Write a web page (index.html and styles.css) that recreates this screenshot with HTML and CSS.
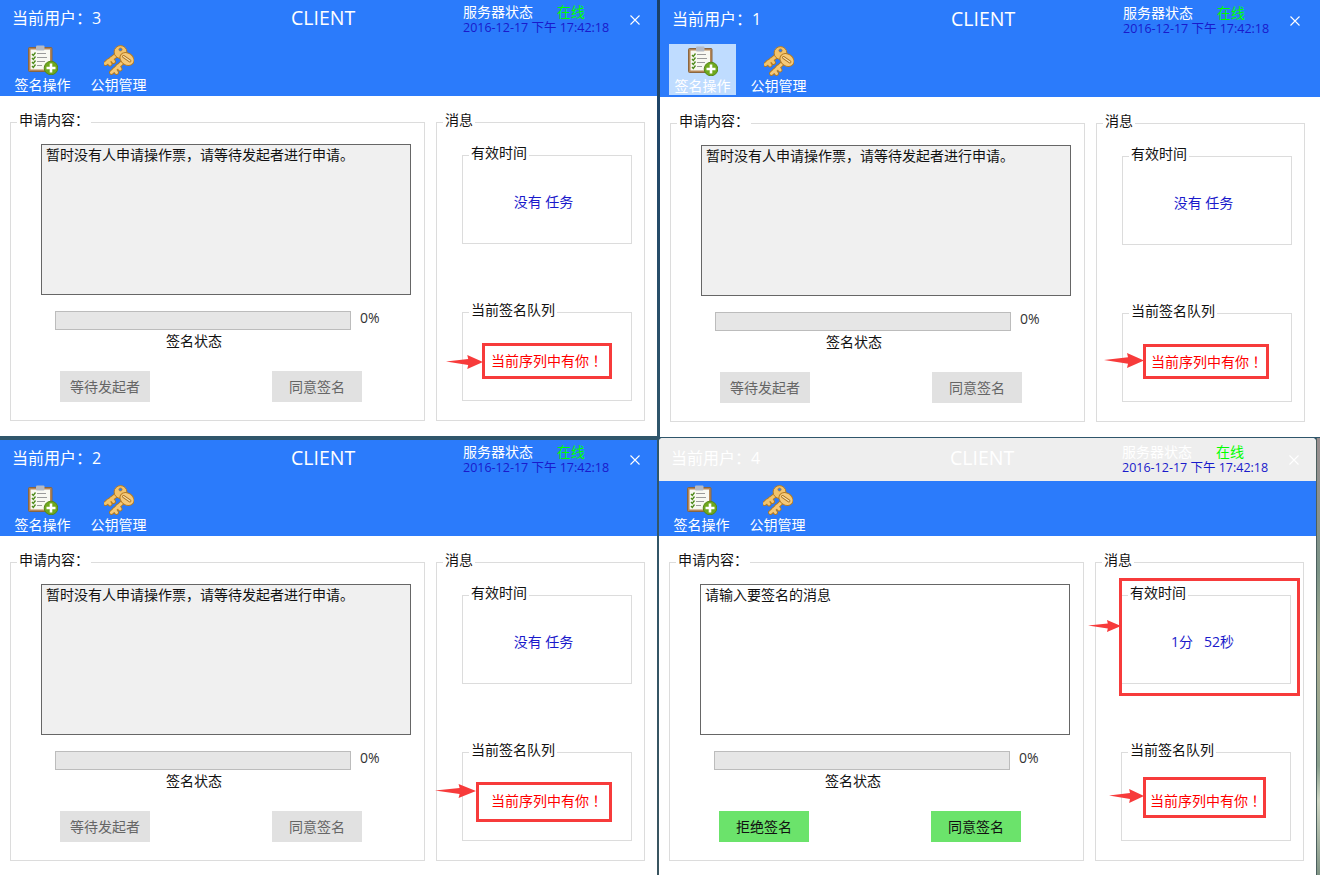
FILE: index.html
```html
<!DOCTYPE html>
<html lang="zh-CN">
<head>
  <meta charset="UTF-8">
  <title>CLIENT</title>
  <link rel="stylesheet" href="styles.css">
</head>
<body>

  <svg class="defs" width="0" height="0">
    <symbol id="icon-clip" viewBox="0 0 30 30">
      <rect x="0.5" y="2.500" width="23.500" height="24" rx="1" fill="#b58758" stroke="#8a6640"/>
      <rect x="2.500" y="4.500" width="19.500" height="20" fill="#f8f8f2"/>
      <rect x="8" y="0.500" width="8.500" height="5" rx="1" fill="#b5bac4"/>
      <path d="M4 9l1.300 1.500 2.200-3M4 13l1.300 1.500 2.200-3M4 17l1.300 1.500 2.200-3M4 21l1.300 1.500 2.200-3" fill="none" stroke="#4d8a1a" stroke-width="1.300"/>
      <path d="M9 8.500h9M9 12.500h10M9 16.500h8M9 20.500h5" stroke="#9a9a9a" stroke-width="1.200"/>
      <circle cx="23" cy="23" r="6.800" fill="#6fa81c" stroke="#55871a"/>
      <path d="M23 18.500v9M18.500 23h9" stroke="#fff" stroke-width="2.600"/>
    </symbol>
    <symbol id="icon-keys" viewBox="0 0 30 30">
      <path d="M15 8L1.500 18.500M4 16l2 3M7.500 13.500l2 3" fill="none" stroke="#b37a22" stroke-width="4.800" stroke-linecap="round"/>
      <path d="M15 8L1.500 18.500M4 16l2 3M7.500 13.500l2 3" fill="none" stroke="#f2c36b" stroke-width="3" stroke-linecap="round"/>
      <circle cx="16.500" cy="7" r="6.400" fill="#f2c36b" stroke="#b37a22"/>
      <circle cx="16.500" cy="4.500" r="1.600" fill="#2b7bfb" stroke="#b37a22" stroke-width="0.700"/>
      <path d="M21 15L7.500 27.500M10.500 24.500l2 3M14 21l2 3" fill="none" stroke="#b37a22" stroke-width="4.800" stroke-linecap="round"/>
      <path d="M21 15L7.500 27.500M10.500 24.500l2 3M14 21l2 3" fill="none" stroke="#f5c979" stroke-width="3" stroke-linecap="round"/>
      <ellipse cx="23" cy="14" rx="7.500" ry="6" transform="rotate(35 23 14)" fill="#f5c979" stroke="#b37a22"/>
      <path d="M19.500 11.500L26 16" stroke="#a86f1e" stroke-width="2.800" stroke-linecap="round"/>
      <path d="M19.500 11.500L26 16" stroke="#f9e3b0" stroke-width="1.200" stroke-linecap="round"/>
    </symbol>
    <symbol id="icon-arrow" viewBox="0 0 40 14" preserveAspectRatio="none">
      <path d="M0 6.500L24 4 23 0 40 7 23 14 24 10z" fill="#f73b3b"/>
    </symbol>
    <symbol id="icon-close" viewBox="0 0 10 10">
      <path d="M0.500 0.500l9 9M9.500 0.500l-9 9" stroke="currentColor" stroke-width="1.100"/>
    </symbol>
  </svg>

  <!-- 窗口 3 -->
  <div class="win win-a">
    <div class="titlebar">
      <div class="user">当前用户：3</div>
      <div class="title">CLIENT</div>
      <div class="status">
        <div class="status-top"><span>服务器状态</span><span class="online">在线</span></div>
        <div class="date">2016-12-17 下午 17:42:18</div>
      </div>
      <svg class="close"><use href="#icon-close"/></svg>
    </div>
    <div class="toolbar">
      <div class="tool"><svg class="tool-icon"><use href="#icon-clip"/></svg><span>签名操作</span></div>
      <div class="tool"><svg class="tool-icon"><use href="#icon-keys"/></svg><span>公钥管理</span></div>
    </div>
    <div class="content">
      <fieldset class="panel main">
        <legend>申请内容：</legend>
        <div class="msg">暂时没有人申请操作票，请等待发起者进行申请。</div>
        <div class="progress-row"><div class="bar"></div><span>0%</span></div>
        <div class="state">签名状态</div>
        <div class="buttons"><div class="btn">等待发起者</div><div class="btn">同意签名</div></div>
      </fieldset>
      <fieldset class="panel side">
        <legend>消息</legend>
        <fieldset class="inner">
          <legend>有效时间</legend>
          <div class="inner-text blue">没有&nbsp;任务</div>
        </fieldset>
        <fieldset class="inner second">
          <legend>当前签名队列</legend>
          <div class="inner-text red">当前序列中有你<span class="bang">！</span></div>
        </fieldset>
      </fieldset>
    </div>
    <div class="mark mark-a"></div>
    <svg class="arrow arrow-a"><use href="#icon-arrow"/></svg>
  </div>

  <!-- 窗口 1 -->
  <div class="win win-b">
    <div class="titlebar">
      <div class="user">当前用户：1</div>
      <div class="title">CLIENT</div>
      <div class="status">
        <div class="status-top"><span>服务器状态</span><span class="online">在线</span></div>
        <div class="date">2016-12-17 下午 17:42:18</div>
      </div>
      <svg class="close"><use href="#icon-close"/></svg>
    </div>
    <div class="toolbar">
      <div class="tool active"><svg class="tool-icon"><use href="#icon-clip"/></svg><span>签名操作</span></div>
      <div class="tool"><svg class="tool-icon"><use href="#icon-keys"/></svg><span>公钥管理</span></div>
    </div>
    <div class="content">
      <fieldset class="panel main">
        <legend>申请内容：</legend>
        <div class="msg">暂时没有人申请操作票，请等待发起者进行申请。</div>
        <div class="progress-row"><div class="bar"></div><span>0%</span></div>
        <div class="state">签名状态</div>
        <div class="buttons"><div class="btn">等待发起者</div><div class="btn">同意签名</div></div>
      </fieldset>
      <fieldset class="panel side">
        <legend>消息</legend>
        <fieldset class="inner">
          <legend>有效时间</legend>
          <div class="inner-text blue">没有&nbsp;任务</div>
        </fieldset>
        <fieldset class="inner second">
          <legend>当前签名队列</legend>
          <div class="inner-text red">当前序列中有你<span class="bang">！</span></div>
        </fieldset>
      </fieldset>
    </div>
    <div class="mark mark-b"></div>
    <svg class="arrow arrow-b"><use href="#icon-arrow"/></svg>
  </div>

  <!-- 窗口 2 -->
  <div class="win win-c">
    <div class="titlebar">
      <div class="user">当前用户：2</div>
      <div class="title">CLIENT</div>
      <div class="status">
        <div class="status-top"><span>服务器状态</span><span class="online">在线</span></div>
        <div class="date">2016-12-17 下午 17:42:18</div>
      </div>
      <svg class="close"><use href="#icon-close"/></svg>
    </div>
    <div class="toolbar">
      <div class="tool"><svg class="tool-icon"><use href="#icon-clip"/></svg><span>签名操作</span></div>
      <div class="tool"><svg class="tool-icon"><use href="#icon-keys"/></svg><span>公钥管理</span></div>
    </div>
    <div class="content">
      <fieldset class="panel main">
        <legend>申请内容：</legend>
        <div class="msg">暂时没有人申请操作票，请等待发起者进行申请。</div>
        <div class="progress-row"><div class="bar"></div><span>0%</span></div>
        <div class="state">签名状态</div>
        <div class="buttons"><div class="btn">等待发起者</div><div class="btn">同意签名</div></div>
      </fieldset>
      <fieldset class="panel side">
        <legend>消息</legend>
        <fieldset class="inner">
          <legend>有效时间</legend>
          <div class="inner-text blue">没有&nbsp;任务</div>
        </fieldset>
        <fieldset class="inner second">
          <legend>当前签名队列</legend>
          <div class="inner-text red">当前序列中有你<span class="bang">！</span></div>
        </fieldset>
      </fieldset>
    </div>
    <div class="mark mark-c"></div>
    <svg class="arrow arrow-c"><use href="#icon-arrow"/></svg>
  </div>

  <!-- 窗口 4：当前签名的窗口 -->
  <div class="win win-d">
    <div class="titlebar">
      <div class="user">当前用户：4</div>
      <div class="title">CLIENT</div>
      <div class="status">
        <div class="status-top"><span>服务器状态</span><span class="online">在线</span></div>
        <div class="date">2016-12-17 下午 17:42:18</div>
      </div>
      <svg class="close"><use href="#icon-close"/></svg>
    </div>
    <div class="toolbar">
      <div class="tool"><svg class="tool-icon"><use href="#icon-clip"/></svg><span>签名操作</span></div>
      <div class="tool"><svg class="tool-icon"><use href="#icon-keys"/></svg><span>公钥管理</span></div>
    </div>
    <div class="content">
      <fieldset class="panel main">
        <legend>申请内容：</legend>
        <div class="msg input">请输入要签名的消息</div>
        <div class="progress-row"><div class="bar"></div><span>0%</span></div>
        <div class="state">签名状态</div>
        <div class="buttons"><div class="btn green">拒绝签名</div><div class="btn green">同意签名</div></div>
      </fieldset>
      <fieldset class="panel side">
        <legend>消息</legend>
        <fieldset class="inner">
          <legend>有效时间</legend>
          <div class="inner-text blue">1分 &nbsp; 52秒</div>
        </fieldset>
        <fieldset class="inner second">
          <legend>当前签名队列</legend>
          <div class="inner-text red">当前序列中有你<span class="bang">！</span></div>
        </fieldset>
      </fieldset>
    </div>
    <div class="mark mark-d1"></div>
    <svg class="arrow arrow-d1"><use href="#icon-arrow"/></svg>
    <div class="mark mark-d2"></div>
    <svg class="arrow arrow-d2"><use href="#icon-arrow"/></svg>
  </div>

  <div class="edge"></div>

</body>
</html>
```

FILE: styles.css
```css
html, body {
  margin: 0;
  padding: 0;
  height: 100%;
  overflow: hidden;
}

body {
  position: relative;
  background: linear-gradient(#1a3f66, #2f566b 50%, #3a5560);
  font-family: "Open Sans", "Noto Sans CJK SC", sans-serif;
  font-size: 14px;
  color: #111;
}

.defs {
  position: absolute;
}

/* windows on the desktop */
.win {
  position: absolute;
  display: flex;
  flex-direction: column;
  background: #fff;
}

.win-a {
  left: 0;
  top: 0;
  width: 657px;
  height: 436px;
}

.win-b {
  left: 660px;
  top: 0;
  width: 660px;
  height: 437px;
}

.win-c {
  left: 0;
  top: 440px;
  width: 657px;
  height: 435px;
}

.win-d {
  left: 659px;
  top: 438px;
  width: 657px;
  height: 437px;
  border-radius: 4px 4px 0 0;
  overflow: hidden;
}

/* desktop wallpaper showing to the right of window 4 */
.edge {
  position: absolute;
  left: 1316px;
  top: 438px;
  bottom: 0;
  width: 3px;
  border-left: 1px solid #4b5f5e;
  background: linear-gradient(#9a8f90, #7c9488 30%, #a9ac90 50%, #8aa08e 75%, #cfd6c4 83%, #7f9384);
}

/* title */
.titlebar {
  display: flex;
  align-items: flex-start;
  box-sizing: border-box;
  height: 44px;
  background: #2b7bfb;
  color: #fff;
}

.win-b .titlebar {
  height: 45px;
  padding-top: 1px;
}

.win-d .titlebar {
  height: 43px;
  padding-top: 2px;
  background: #eee;
}

.user {
  box-sizing: border-box;
  width: 291px;
  padding-left: 12px;
  font-size: 16px;
  line-height: 36px;
}

.title {
  width: 172px;
  font-size: 19.500px;
  line-height: 36px;
}

.status {
  width: 167px;
  padding-top: 3px;
}

.status-top {
  display: flex;
  gap: 24px;
  line-height: 18px;
}

.online {
  color: #0f0;
}

.date {
  font-size: 12.500px;
  line-height: 14px;
  color: #1a1acb;
  white-space: nowrap;
}

.close {
  flex: none;
  width: 10px;
  height: 10px;
  margin-top: 15px;
}

/* toolbar */
.toolbar {
  display: flex;
  gap: 9px;
  height: 52px;
  padding-left: 9px;
  background: #2b7bfb;
  color: #fff;
}

.win-d .toolbar {
  height: 55px;
  box-sizing: border-box;
  padding-top: 3px;
}

.tool {
  display: flex;
  flex-direction: column;
  align-items: center;
  box-sizing: border-box;
  width: 67px;
  height: 51px;
  padding-top: 1px;
  line-height: 20px;
}

.win-b .tool {
  margin-top: -1px;
  padding-top: 2px;
}

.tool.active {
  background: #bfdcff;
}

.tool-icon {
  display: block;
  flex: none;
  width: 30px;
  height: 30px;
}

/* panels */
.content {
  display: flex;
  gap: 11px;
  padding: 14px 0 0 10px;
}

fieldset {
  margin: 0;
  padding: 0;
  min-width: 0;
  box-sizing: border-box;
  border: 1px solid #dcdcdc;
}

/* the extra bottom padding lifts the caption above the border line */
legend {
  padding: 0 2px 4px;
  line-height: 20px;
  color: #111;
}

.panel {
  height: 311px;
}

.main {
  width: 415px;
}

.main legend {
  margin-left: 6px;
}

.side {
  width: 209px;
}

.side > legend {
  margin-left: 6px;
}

.msg {
  box-sizing: border-box;
  width: 370px;
  height: 151px;
  margin: 10px 0 0 30px;
  padding: 0 4px;
  border: 1px solid #666;
  background: #f0f0f0;
  line-height: 20px;
}

.msg.input {
  background: #fff;
}

.progress-row {
  display: flex;
  gap: 9px;
  margin: 16px 0 0 44px;
  line-height: 14px;
  color: #333;
}

.bar {
  box-sizing: border-box;
  width: 296px;
  height: 19px;
  border: 1px solid #bcbcbc;
  background: #e6e6e6;
}

.state {
  margin: 1px 0 0 155px;
  line-height: 20px;
}

.buttons {
  display: flex;
  gap: 122px;
  margin: 20px 0 0 49px;
}

.btn {
  width: 90px;
  height: 31px;
  background: #e1e1e1;
  color: #666;
  text-align: center;
  line-height: 31px;
}

.btn.green {
  background: #6be36b;
  color: #111;
}

.inner {
  width: 170px;
  height: 101px;
  margin: 9px 0 0 25px;
}

.inner.second {
  margin-top: 56px;
}

.inner legend {
  margin-left: 6px;
}

.inner-text {
  display: flex;
  align-items: center;
  justify-content: center;
  height: 68px;
  white-space: pre;
}

.inner.second .inner-text {
  height: 72px;
}

.blue {
  padding-right: 7px;
  color: #1a1acb;
}

.red {
  color: #f00;
}

/* this family centres the full-width exclamation mark in its cell */
.bang {
  font-family: "Noto Sans CJK TC", sans-serif;
}

/* red annotations over the screenshot */
.mark {
  position: absolute;
  box-sizing: border-box;
  border: 3px solid #f73b3b;
}

.arrow {
  position: absolute;
}

.mark-a {
  left: 482px;
  top: 343px;
  width: 130px;
  height: 36px;
}

.arrow-a {
  left: 446px;
  top: 355px;
  width: 37px;
  height: 14px;
}

.mark-b {
  left: 483px;
  top: 344px;
  width: 126px;
  height: 35px;
}

.arrow-b {
  left: 444px;
  top: 353px;
  width: 40px;
  height: 15px;
}

.mark-c {
  left: 476px;
  top: 342px;
  width: 136px;
  height: 40px;
}

.arrow-c {
  left: 435px;
  top: 344px;
  width: 41px;
  height: 14px;
}

.mark-d1 {
  left: 460px;
  top: 140px;
  width: 181px;
  height: 118px;
}

.arrow-d1 {
  left: 429px;
  top: 182px;
  width: 33px;
  height: 12px;
}

.mark-d2 {
  left: 484px;
  top: 339px;
  width: 123px;
  height: 41px;
}

.arrow-d2 {
  left: 450px;
  top: 351px;
  width: 35px;
  height: 14px;
}
```
